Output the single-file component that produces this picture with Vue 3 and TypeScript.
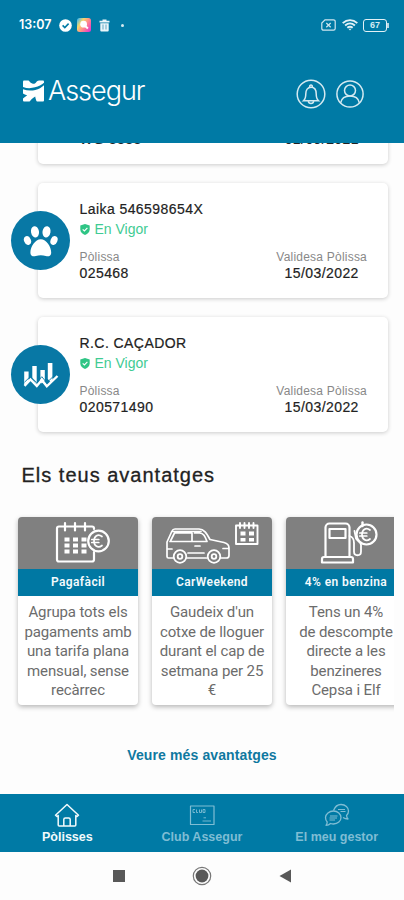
<script setup lang="ts">
interface Policy {
  icon: 'paw' | 'chart' | null
  name: string
  number: string
  date: string
}
interface Benefit {
  icon: 'calendar' | 'car' | 'fuel'
  title: string
  lines: string[]
}
interface Tab {
  icon: 'home' | 'club' | 'chat'
  label: string
  active: boolean
}

const policies: Policy[] = [
  { icon: null, name: '', number: 'WG 8888', date: '01/09/2021' },
  { icon: 'paw', name: 'Laika 546598654X', number: '025468', date: '15/03/2022' },
  { icon: 'chart', name: 'R.C. CAÇADOR', number: '020571490', date: '15/03/2022' },
]

const benefits: Benefit[] = [
  { icon: 'calendar', title: 'Pagafàcil', lines: ['Agrupa tots els', 'pagaments amb', 'una tarifa plana', 'mensual, sense', 'recàrrec'] },
  { icon: 'car', title: 'CarWeekend', lines: ["Gaudeix d'un", 'cotxe de lloguer', 'durant el cap de', 'setmana per 25', '€'] },
  { icon: 'fuel', title: '4% en benzina', lines: ['Tens un 4%', 'de descompte', 'directe a les', 'benzineres', 'Cepsa i Elf'] },
]

const tabs: Tab[] = [
  { icon: 'home', label: 'Pòlisses', active: true },
  { icon: 'club', label: 'Club Assegur', active: false },
  { icon: 'chat', label: 'El meu gestor', active: false },
]

const dotColumns = [0, 1, 2]
</script>

<template>
  <div class="phone">
    <header class="header">
      <div class="status">
        <div class="status-left">
          <span class="clock">13:07</span>
          <svg width="13" height="13" viewBox="0 0 13 13">
            <circle cx="6.5" cy="6.5" r="6.3" fill="#fff" />
            <path d="M3.600 6.400l2.200 2.200 3.800-4" fill="none" stroke="#007aa5" stroke-width="1.600" />
          </svg>
          <svg class="app" width="14" height="14" viewBox="0 0 14 14">
            <defs>
              <linearGradient id="app-tint" x1="0" y1="0.1" x2="1" y2="0.8">
                <stop offset="0" stop-color="#38b6f5" />
                <stop offset="0.3" stop-color="#f5d76b" />
                <stop offset="0.6" stop-color="#ff8a8a" />
                <stop offset="1" stop-color="#e63cc8" />
              </linearGradient>
            </defs>
            <rect width="14" height="14" rx="2.500" fill="url(#app-tint)" />
            <circle cx="6.600" cy="6.200" r="3.400" fill="#fff" />
            <path d="M8.500 8.300l2.400 2.200" stroke="#fff" stroke-width="2" />
          </svg>
          <svg class="bin" width="11" height="13" viewBox="0 0 11 13">
            <path d="M.5 1.800h3V.5h4v1.300h3v1.800H.5zM1.300 4.200h8.400v7.300a1 1 0 0 1-1 1H2.300a1 1 0 0 1-1-1z" fill="#eaf6fa" />
            <path d="M4 5.500v5M7 5.500v5" stroke="#62a9c4" />
          </svg>
          <span class="dot"></span>
        </div>
        <div class="status-right">
          <svg width="15" height="12" viewBox="0 0 15 12" fill="none" stroke="#cfe6ef" stroke-width="1.200">
            <path d="M4 .8h8.500a1.700 1.700 0 0 1 1.700 1.700v7a1.700 1.700 0 0 1-1.700 1.700h-10A1.700 1.700 0 0 1 .8 9.500V4z" />
            <path d="M5.300 4l4.400 4.200M9.700 4L5.300 8.200" />
          </svg>
          <svg width="16" height="12" viewBox="0 0 16 12" fill="none" stroke="#e2f1f6" stroke-width="1.900">
            <path d="M.7 4.100c4.300-4 10.300-4 14.600 0M3.100 6.500c3-2.600 6.800-2.600 9.800 0M5.300 8.800c1.700-1.400 3.700-1.400 5.400 0" />
            <path d="M6.500 9.800h3L8 11.500z" fill="#e2f1f6" stroke="none" />
          </svg>
          <span class="battery"><span class="cell">67</span><span class="cap"></span></span>
        </div>
      </div>
      <div class="brand-row">
        <div class="brand">
          <svg width="21" height="22" viewBox="0 0 21 22">
            <rect y="0.500" width="21" height="21" rx="1" fill="#fff" />
            <g fill="#007aa5">
              <path d="M5.500 0h10.500c-1.200.4-2 1.300-2.800 2.300C12 3.700 10.800 4.200 9.300 3.600 7.600 3 6.600 1.700 5.500 0z" />
              <path d="M0 7c4.500 1.700 8.500 1.300 12 .3 3.800-1 6.500-2.300 9-4.500v2.400c-2.500 2.300-5.200 3.800-8.700 4.700C8 11 4 10.600 0 9.200z" />
              <path d="M0 13.500c2 1.200 3.200 1.500 4.200 1.800L0 18.600z" />
              <path d="M6.500 22c1-2 3.200-4 5.700-5.500.3 2 .8 3.700 1.800 5.500z" />
            </g>
          </svg>
          <span class="brand-name">Assegur</span>
        </div>
        <div class="actions">
          <svg width="30" height="30" viewBox="0 0 30 30" fill="none" stroke="#d5eaf1" stroke-width="1.500">
            <circle cx="15" cy="15" r="13.800" />
            <path d="M7.500 21.800c1.900-1.700 2.300-3.300 2.300-7 0-3.700 1.800-6.600 5.200-6.600s5.200 2.900 5.200 6.600c0 3.700.4 5.300 2.300 7z" />
            <path d="M13.600 8.200C13.600 5.400 16.400 5.400 16.400 8.200M12.300 22.200c.4 3.200 5 3.200 5.400 0" />
          </svg>
          <svg width="28" height="28" viewBox="0 0 28 28" fill="none" stroke="#d5eaf1" stroke-width="1.500">
            <circle cx="14" cy="14" r="13.100" />
            <circle cx="14" cy="10.500" r="5.500" />
            <path d="M4.600 22.800C5.500 18.500 9 16 14 16s8.500 2.500 9.400 6.800" />
          </svg>
        </div>
      </div>
    </header>

    <main class="content">
      <section class="policies">
        <article v-for="policy in policies" :key="policy.number" class="policy">
          <div v-if="policy.icon" class="badge">
            <svg v-if="policy.icon === 'paw'" width="36" height="32" viewBox="0 0 36 32" fill="#fff">
              <ellipse cx="12" cy="6.800" rx="4" ry="5.700" transform="rotate(-10 12 6.800)" />
              <ellipse cx="23.500" cy="6.800" rx="4" ry="5.700" transform="rotate(10 23.500 6.800)" />
              <ellipse cx="4.500" cy="15.500" rx="3.400" ry="4.600" transform="rotate(-22 4.500 15.500)" />
              <ellipse cx="31" cy="15.500" rx="3.400" ry="4.600" transform="rotate(22 31 15.500)" />
              <path d="M17.800 14.200c5.600 0 10.400 7.500 10.400 13.300 0 3.500-2.400 4.400-5.400 3.500-3.200-.9-6.800-.9-10 0-3 .9-5.400 0-5.400-3.500 0-5.800 4.800-13.300 10.400-13.300z" />
            </svg>
            <svg v-else width="36" height="28" viewBox="0 0 36 28" fill="#fff">
              <path d="M1.200 10.500h4.400v10L1.200 24zM9.300 5h4.400v18l-4.400-5.500zM17.400 9h4.400v10.500l-3 3-1.400-2zM24.800 2h4.600v17l-2 2-2.600-3z" />
              <path d="M1.500 24.800l6-6.300 6.300 6.500 5-6 5 6.300L34.500 15" fill="none" stroke="#fff" stroke-width="2.400" />
              <path d="M1.500 21.200l6-5.800 6.300 6.300 5-6 5 6 7-6.800" fill="none" stroke="#0878a5" stroke-width="0.900" />
            </svg>
          </div>
          <template v-if="policy.name">
            <h3 class="policy-name">{{ policy.name }}</h3>
            <div class="state">
              <svg width="10" height="11" viewBox="0 0 10 11">
                <path d="M5 0l4.700 1.600v3.600c0 2.700-1.900 4.700-4.700 5.700C2.200 9.900.3 7.900.3 5.200V1.600z" fill="#2fc585" />
                <path d="M2.700 5.300l1.700 1.700 3-3.200" fill="none" stroke="#fff" stroke-width="1.100" />
              </svg>
              <span>En Vigor</span>
            </div>
          </template>
          <div class="facts">
            <div class="fact">
              <span v-if="policy.name" class="label">Pòlissa</span>
              <span class="value">{{ policy.number }}</span>
            </div>
            <div class="fact centred">
              <span v-if="policy.name" class="label">Validesa Pòlissa</span>
              <span class="value" :class="{ inset: !policy.name }">{{ policy.date }}</span>
            </div>
          </div>
        </article>
      </section>

      <h2 class="heading">Els teus avantatges</h2>

      <section class="benefits">
        <article v-for="benefit in benefits" :key="benefit.title" class="benefit">
          <div class="picture">
            <svg width="120" height="52" viewBox="0 0 120 52" fill="none" stroke="#fff" stroke-width="2.200" stroke-linejoin="round" stroke-linecap="round">
              <template v-if="benefit.icon === 'calendar'">
                <path d="M76 12V11.500a2 2 0 0 0-2-2H41a2 2 0 0 0-2 2v31a2 2 0 0 0 2 2h33a2 2 0 0 0 2-2V35M47 6v7.500M57 6v7.500M67 6v7.500" />
                <g fill="#fff" stroke="none">
                  <template v-for="c in dotColumns" :key="c">
                    <rect v-for="r in dotColumns" :key="r" :x="46.500 + c * 8.500" :y="20.500 + r * 6" width="5" height="4" />
                  </template>
                </g>
                <circle cx="80.500" cy="24" r="10.300" fill="#808080" />
                <path d="M84 19.500c-4-3.200-8-.5-8 4.500s4 7.700 8 4.500M73.800 22.500h7M73.800 25.500h7" stroke-width="1.700" />
              </template>
              <template v-else-if="benefit.icon === 'car'">
                <path d="M21 41h-4.500a1.500 1.500 0 0 1-1.500-1.500V25l5-11c.5-1.200 1.500-2 3-2h24c5 0 7.500 4 11 10.500l14 3c3 .8 5 2.500 5 5.500v7.500c0 1.500-1 2.500-2.500 2.500H69M54.500 41H35M21 14.500h28M18.500 24l4-8H40v8.500H18zM42.500 16h5c4 0 5.500 3 7.500 8.500H40M43 29h5M15 32h5M36 36h16M71 31.500h5" stroke-width="1.700" />
                <g stroke-width="1.800">
                  <circle cx="28" cy="39.500" r="6.300" fill="#808080" />
                  <circle cx="28" cy="39.500" r="2.300" />
                  <circle cx="62" cy="39.500" r="6.300" fill="#808080" />
                  <circle cx="62" cy="39.500" r="2.300" />
                </g>
                <path d="M84 8.500h21.500v18.500H84zM88 6v5M92.500 6v5M97 6v5M101.500 6v5" stroke-width="1.900" />
                <path d="M88.500 14.500h5v4h-5zM97 14.500h5v4h-5zM88.500 21h5v3.500h-5zM97 21h5v3.500h-5z" fill="#fff" stroke="none" />
              </template>
              <template v-else>
                <path d="M39.500 40V10.500a4 4 0 0 1 4-4h16a4 4 0 0 1 4 4V40M36 45.500V42a2 2 0 0 1 2-2h27a2 2 0 0 1 2 2v3.500zM43.500 12h16v9h-16z" />
                <path d="M63.500 19c3.500 1 4.500 3 4.500 7v8.500c0 5 7 5 7 0V28c0-3-3.500-4-5-6.500L68.500 14" stroke-width="1.800" />
                <circle cx="80.500" cy="17.500" r="10" fill="#808080" />
                <path d="M84 13c-4-3.200-8-.5-8 4.500s4 7.700 8 4.500M73.800 16h7M73.800 19h7" stroke-width="1.700" />
                <path d="M76.500 5.500v3.500" stroke-width="2.400" />
              </template>
            </svg>
          </div>
          <h4 class="benefit-title">{{ benefit.title }}</h4>
          <p class="benefit-text">
            <span v-for="line in benefit.lines" :key="line">{{ line }}</span>
          </p>
        </article>
      </section>

      <a class="more">Veure més avantatges</a>
    </main>

    <nav class="tabs">
      <div v-for="tab in tabs" :key="tab.label" class="tab" :class="{ active: tab.active }">
        <svg width="26" height="24" viewBox="0 0 26 24" fill="none" stroke="currentColor" stroke-width="1.500" stroke-linejoin="round">
          <path v-if="tab.icon === 'home'" d="M1.500 12.200L13 1.500l11.500 10.700-1.500 1.300-1.200-1V22a1 1 0 0 1-1 1H5.200a1 1 0 0 1-1-1v-9.500l-1.200 1zM9.800 23v-6.500a1.500 1.500 0 0 1 1.500-1.500h3.400a1.500 1.500 0 0 1 1.500 1.500V23" />
          <template v-else-if="tab.icon === 'club'">
            <rect x="1.500" y="3" width="23.500" height="18.500" stroke-width="1.200" />
            <path d="M6 6.500H4v3h2M7.500 6.500v3h1.500M10.500 6.500v3h2v-3M14 6.500v3h2v-3zM14.500 14.800h2.500M13.500 18h8.500" stroke-width="0.900" />
          </template>
          <template v-else>
            <path d="M9.500 7.500C11 3.500 14 1.500 17 1.500c4.500 0 7.500 3 7.500 6.500 0 2-.8 3.500-2 4.500.2 1.500.7 2.500 1.500 3.500-2 0-3.500-.5-5-1.500" stroke-width="1.300" />
            <path d="M9.500 8c4.200 0 7.500 2.900 7.500 6.500S13.700 21 9.500 21c-1 0-2-.2-3-.5-1 1-2.500 1.700-4.500 1.800.8-1 1.200-2 1.200-3.300C2 17.800 1.500 16.200 1.500 14.500 1.500 10.900 5.300 8 9.500 8z" stroke-width="1.300" />
            <path d="M6 13h7.500M5.500 15h7.500M5.500 17h5.500M14 6.500h7M16.500 8.500h5" stroke-width="1.100" />
          </template>
        </svg>
        <span>{{ tab.label }}</span>
      </div>
    </nav>

    <footer class="system">
      <svg width="20" height="20" viewBox="0 0 20 20"><rect x="5" y="4" width="12" height="12" fill="#585858" /></svg>
      <svg width="20" height="20" viewBox="0 0 20 20">
        <circle cx="10" cy="10" r="8.700" fill="none" stroke="#777" stroke-width="1.200" />
        <circle cx="10" cy="10" r="6.400" fill="#585858" />
      </svg>
      <svg width="20" height="20" viewBox="0 0 20 20"><path d="M3.500 10L15 3.500v13z" fill="#585858" /></svg>
    </footer>
  </div>
</template>

<style>
body {
  background: #fdfdfd;
}
</style>

<style scoped>
.phone {
  display: flex;
  flex-direction: column;
  width: 404px;
  height: 900px;
  overflow: hidden;
  background: #fdfdfd;
  font-family: "Liberation Sans", Arial, sans-serif;
  color: #222;
}
.header {
  box-sizing: border-box;
  flex: none;
  height: 143px;
  padding: 14px 15px 0 19px;
  background: #007aa5;
  color: #fff;
}
.status {
  display: flex;
  justify-content: space-between;
  height: 22px;
}
.status-left,
.status-right {
  display: flex;
  align-items: center;
}
.clock {
  width: 39.500px;
  font: 600 12.500px/22px Inter, sans-serif;
}
.app {
  margin-left: 5px;
}
.bin {
  margin-left: 8px;
}
.dot {
  width: 3px;
  height: 3px;
  margin-left: 11px;
  border-radius: 50%;
  background: #d5eaf1;
}
.status-right {
  gap: 5.500px;
}
.battery {
  display: flex;
  align-items: center;
}
.cell {
  box-sizing: border-box;
  width: 24px;
  height: 13px;
  border: 1.500px solid #e2f1f6;
  border-radius: 3px;
  font: 700 9px/11px "Liberation Sans", sans-serif;
  text-align: center;
  color: #d5eaf1;
}
.cap {
  width: 2px;
  height: 5px;
  background: #b5d8e5;
}
.brand-row {
  display: flex;
  justify-content: space-between;
  align-items: center;
  height: 32px;
  margin-top: 42px;
  padding: 0 25px 0 4px;
}
.brand {
  display: flex;
  align-items: center;
  gap: 4px;
  margin-top: -6px;
}
.brand-name {
  font: 300 27px/32px Inter, sans-serif;
  letter-spacing: -1px;
}
.actions {
  display: flex;
  align-items: center;
  gap: 10px;
}
.content {
  display: flex;
  flex-direction: column;
  flex: none;
  height: 651px;
  overflow: hidden;
}
.policies {
  display: flex;
  flex-direction: column;
  gap: 19px;
  margin-top: -94px;
  padding: 0 16px 0 38px;
}
.policy {
  position: relative;
  box-sizing: border-box;
  display: flex;
  flex-direction: column;
  justify-content: flex-end;
  height: 115px;
  padding: 0 21px 16px 41.500px;
  border-radius: 5px;
  background: #fff;
  box-shadow: 0 1px 4px rgba(0, 0, 0, 0.2);
}
.badge {
  position: absolute;
  top: 28px;
  left: -27px;
  display: flex;
  align-items: center;
  justify-content: center;
  width: 59px;
  height: 59px;
  border-radius: 50%;
  background: #0878a5;
}
.policy-name {
  margin: 0;
  font-size: 14px;
  font-weight: 400;
  line-height: 20px;
  letter-spacing: 0.43px;
  white-space: nowrap;
  -webkit-text-stroke: 0.2px #222;
}
.state {
  display: flex;
  align-items: center;
  gap: 5px;
  margin-bottom: 10px;
  font-size: 14px;
  line-height: 20px;
  color: #3fcb93;
}
.facts {
  display: flex;
  justify-content: space-between;
}
.fact {
  display: flex;
  flex-direction: column;
}
.centred {
  align-items: center;
}
.label {
  font-size: 12px;
  line-height: 16px;
  letter-spacing: 0.22px;
  color: #888;
}
.value {
  font-size: 14px;
  line-height: 17px;
  letter-spacing: 0.43px;
  -webkit-text-stroke: 0.2px #222;
}
.inset {
  margin-right: 8px;
}
.heading {
  margin: 32px 0 0 21.500px;
  font-size: 20px;
  font-weight: 400;
  line-height: 22px;
  letter-spacing: 1px;
  -webkit-text-stroke: 0.3px #222;
}
.benefits {
  display: flex;
  gap: 14px;
  width: 376px;
  margin: 21px 0 0 8px;
  padding: 10px 0 10px 10px;
  box-sizing: content-box;
  overflow: hidden;
}
.benefit {
  flex: none;
  width: 120px;
  height: 188px;
  border-radius: 4px;
  background: #fff;
  box-shadow: 0 2px 5px rgba(0, 0, 0, 0.28);
  overflow: hidden;
}
.picture {
  height: 52px;
  background: #808080;
}
.benefit-title {
  margin: 0;
  font: 600 12px/27px Roboto, sans-serif;
  letter-spacing: 0.4px;
  text-align: center;
  color: #f4fafc;
  background: #0078a3;
}
.benefit-text {
  display: flex;
  flex-direction: column;
  align-items: center;
  margin: 7px 0 0;
  font: 400 15px/19.500px Roboto, sans-serif;
  letter-spacing: -0.12px;
  color: #6c6c6c;
  white-space: nowrap;
}
.more {
  margin-top: 31px;
  font-size: 14px;
  font-weight: 700;
  line-height: 18px;
  letter-spacing: 0.12px;
  text-align: center;
  color: #0f78a0;
}
.tabs {
  display: flex;
  flex: none;
  height: 58px;
  background: #007aa5;
}
.tab {
  display: flex;
  flex: 1;
  flex-direction: column;
  align-items: center;
  padding-top: 9px;
  font-size: 12.500px;
  font-weight: 700;
  line-height: 21px;
  color: #7fbdd4;
}
.active {
  color: #f2fafc;
}
.system {
  display: flex;
  flex: 1;
  align-items: center;
  justify-content: space-between;
  padding: 0 108px 0 108px;
}
</style>
